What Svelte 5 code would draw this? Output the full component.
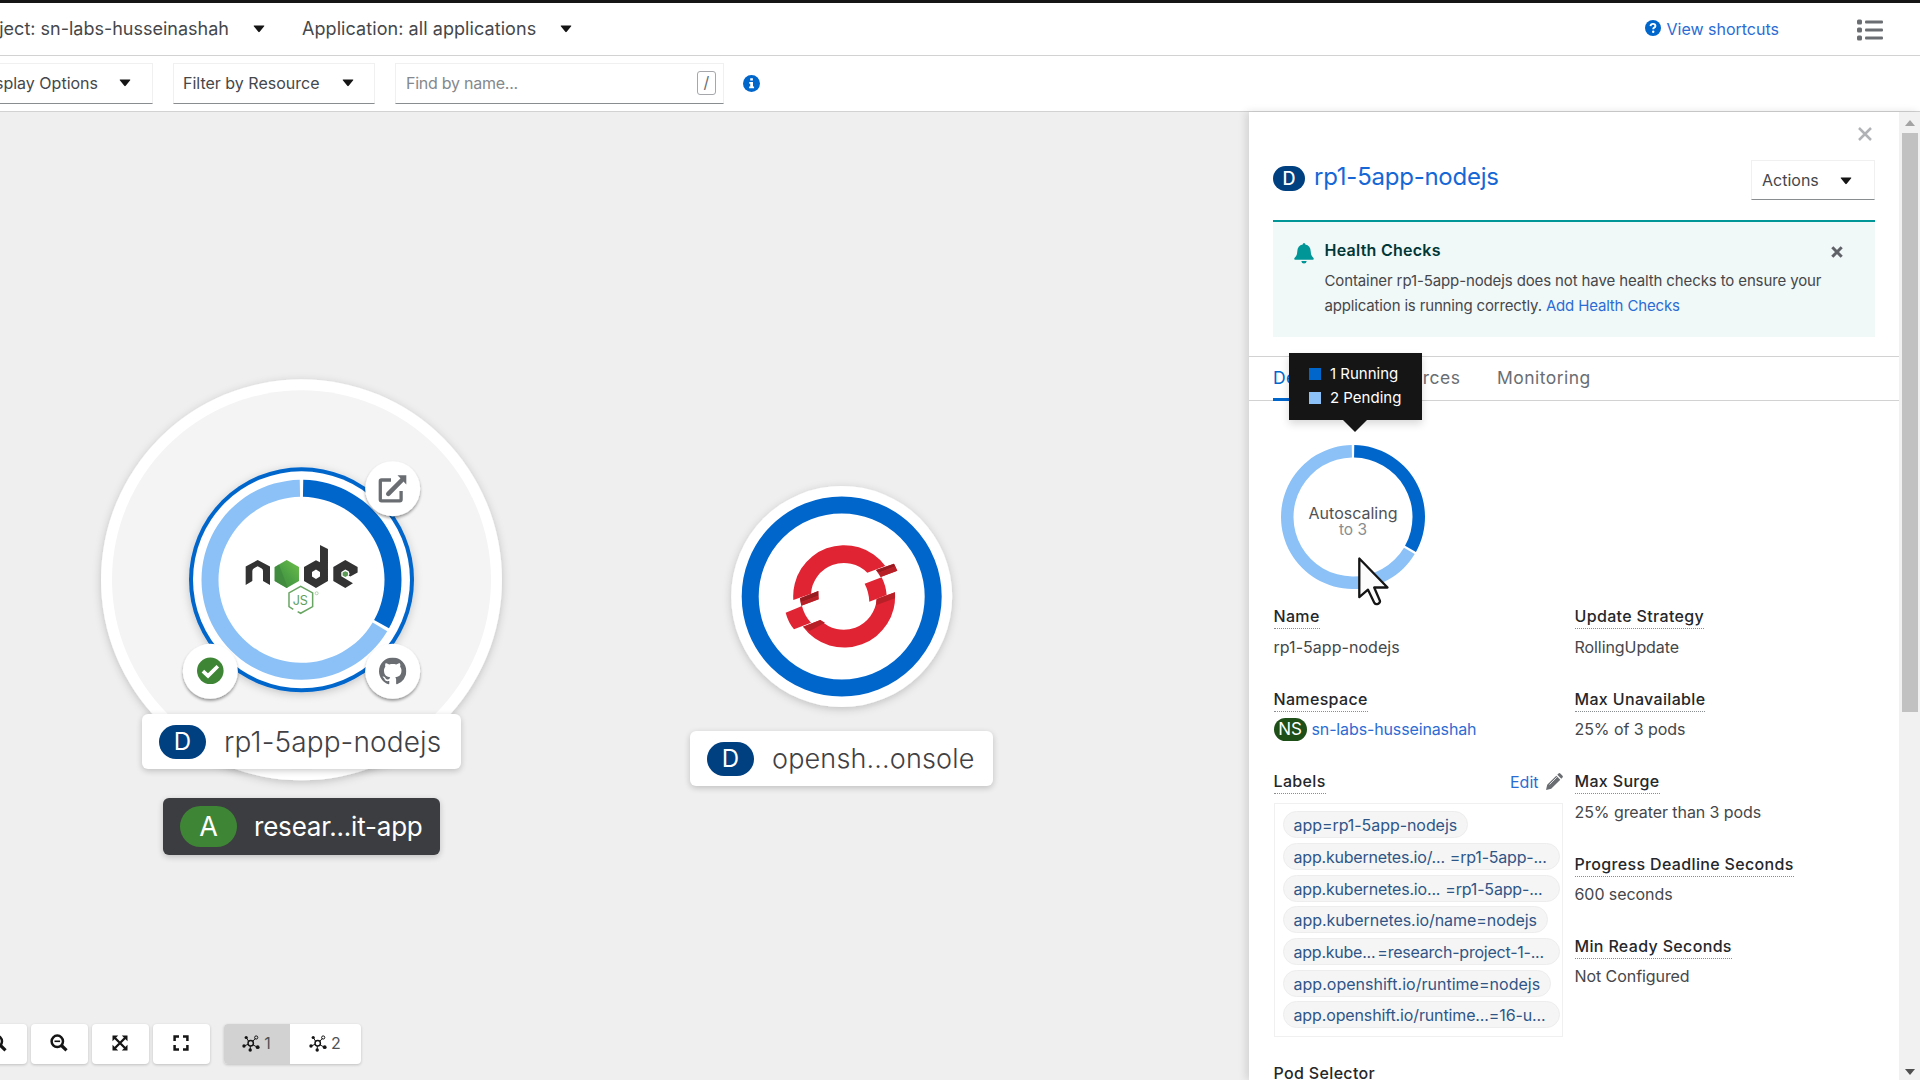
<script>
  const labels = [
    { key: 'app', value: '=rp1-5app-nodejs', width: 185, gap: 0, track: -0.06 },
    { key: 'app.kubernetes.io/...', value: '=rp1-5app-...', width: 277, gap: 5, track: -0.2 },
    { key: 'app.kubernetes.io...', value: '=rp1-5app-...', width: 277, gap: 5, track: -0.18 },
    { key: 'app.kubernetes.io/name', value: '=nodejs', width: 265, gap: 0, track: -0.06 },
    { key: 'app.kube...', value: '=research-project-1-...', width: 277, gap: 2, track: -0.23 },
    { key: 'app.openshift.io/runtime', value: '=nodejs', width: 268, gap: 0, track: 0.02 },
    { key: 'app.openshift.io/runtime...', value: '=16-u...', width: 277, gap: 0, track: -0.13 },
  ];

  const strategy = [
    { term: 'Update Strategy', text: 'RollingUpdate' },
    { term: 'Max Unavailable', text: '25% of 3 pods' },
    { term: 'Max Surge', text: '25% greater than 3 pods' },
    { term: 'Progress Deadline Seconds', text: '600 seconds' },
    { term: 'Min Ready Seconds', text: 'Not Configured' },
  ];

  // Annular sector centred on 0,0; angles in degrees clockwise from the top.
  function sector(r0, r1, from, to) {
    const p = (r, a) => {
      const t = ((a - 90) * Math.PI) / 180;
      return `${(r * Math.cos(t)).toFixed(2)} ${(r * Math.sin(t)).toFixed(2)}`;
    };
    const big = to - from > 180 ? 1 : 0;
    return `M${p(r1, from)}A${r1} ${r1} 0 ${big} 1 ${p(r1, to)}L${p(r0, to)}A${r0} ${r0} 0 ${big} 0 ${p(r0, from)}Z`;
  }
</script>

{#snippet caret()}
  <svg class="caret" viewBox="0 0 12 8" width="12" height="8"><path d="M1.2 .5h9.6q.9 0 .4.8L6.7 6.8q-.7.7-1.4 0L.8 1.300q-.5-.8.4-.8z" fill="#151515" /></svg>
{/snippet}

{#snippet mesh()}
  <svg viewBox="0 0 18 17" width="18" height="17" fill="none" stroke="#151515">
    <circle cx="8.700" cy="8.200" r="2.700" stroke-width="1.500" />
    <path d="M6.500 6.200L4.300 2.600M11 6.200l2.300-2.800M6.200 9.300L2.500 10.800M11 9.800l3.500 2M8.300 11v3.500" stroke-width="1" />
    <circle cx="14.200" cy="2.500" r="1.600" stroke-width="1" />
    <g fill="#151515" stroke="none"><circle cx="4.200" cy="2.500" r="1.600" /><circle cx="2" cy="11" r="1.700" /><circle cx="15.700" cy="12.200" r="1.900" /><circle cx="8.200" cy="15" r="1.700" /></g>
  </svg>
{/snippet}

<div class="page">
  <header class="context">
    <div class="menu project"><span>Project: sn-labs-husseinashah</span>{@render caret()}</div>
    <div class="menu app"><span>Application: all applications</span>{@render caret()}</div>
    <a class="shortcuts" href="#shortcuts">
      <svg viewBox="0 0 16 16" width="16" height="16"><circle cx="8" cy="8" r="8" fill="#06c" /><path d="M5.500 6.200q.2-2.300 2.500-2.300 2.400 0 2.400 2 0 1.200-1.200 1.800-1 .5-1 1.500" fill="none" stroke="#fff" stroke-width="1.900" /><circle cx="8.200" cy="11.800" r="1.200" fill="#fff" /></svg>
      <span>View shortcuts</span>
    </a>
    <svg class="list" viewBox="0 0 26 22" width="26" height="22" fill="#6a6e73">
      {#each [0.5, 8.5, 16.5] as y}<rect x="0" y={y} width="5" height="5" rx="1.500" /><rect x="8" y={y + 0.9} width="18" height="3.200" rx="1" />{/each}
    </svg>
  </header>

  <div class="filters">
    <div class="select display"><span>Display Options</span>{@render caret()}</div>
    <div class="select resource"><span>Filter by Resource</span>{@render caret()}</div>
    <div class="search"><span>Find by name...</span><kbd>/</kbd></div>
    <svg class="info" viewBox="0 0 16 16" width="17" height="17"><circle cx="8" cy="8" r="8" fill="#06c" /><path d="M6.800 3h2.500v2.200H6.800zM5.900 6.500h3.500v4.300h1v1.700H5.800v-1.700h1V8.200h-.9z" fill="#fff" /></svg>
  </div>

  <main>
    <section class="canvas">
      <svg class="graph" width="1249" height="968" viewBox="0 112 1249 968">
        <defs>
          <filter id="soft" x="-20%" y="-20%" width="140%" height="140%"><feDropShadow dx="0" dy="2" stdDeviation="4" flood-color="#030303" flood-opacity=".2" /></filter>
          <filter id="tight" x="-30%" y="-30%" width="160%" height="160%"><feDropShadow dx="0" dy="2" stdDeviation="1.800" flood-color="#030303" flood-opacity=".4" /></filter>
          <linearGradient id="leaf" x1="0" y1="1" x2="1" y2="0"><stop offset="0" stop-color="#3f8b3d" /><stop offset=".45" stop-color="#4b9e43" /><stop offset="1" stop-color="#6cc04a" /></linearGradient>
        </defs>

        <g transform="translate(301.500 579.800)">
          <circle r="200.500" fill="#fff" filter="url(#soft)" />
          <circle r="189.500" fill="#f4f4f4" />
          <circle r="112.500" fill="#06c" filter="url(#soft)" />
          <circle r="108.500" fill="#fff" />
          <path d={sector(83, 100, 1, 119)} fill="#06c" />
          <path d={sector(83, 100, 121, 359)} fill="#8bc1f7" />
        </g>

        <svg x="243.300" y="543.300" width="116.700" height="73.300" viewBox="490 550 350 220">
          <path d="M497 675V620L533 600l37 20v55l-21-12v-30q0-6-5-8l-11-6-11 6q-5 3-5 8v30z" fill="#333" />
          <path d="M620 600l37 21v42l-37 21-36-21v-42z" fill="url(#leaf)" />
          <path d="M597 614l-13 8v41l36 21 3-1z" fill="#3f873f" opacity=".7" />
          <path d="M720 555l24 12v96l-36 21-36-21v-42l36-20 12 6zM708 629l-12 7v14l12 7 12-7v-14z" fill="#333" fill-rule="evenodd" />
          <path d="M796 600l37 21v17l-22 12-5-3 3-5-3-8-10-5-12 7v13l35 21-23 14-36-21v-42z" fill="#333" />
          <path d="M796 634l8 4v9l-8 4-8-4v-9z" fill="#5a9a55" />
          <path d="M640 748l-13-8v-41l35-20 36 20v41l-36 20-9-5" fill="none" stroke="#6aa663" stroke-width="4.500" />
          <text class="js" x="638" y="735">JS</text>
          <circle cx="710" cy="700" r="4.500" fill="none" stroke="#8fc08a" stroke-width="2" />
        </svg>

        <g filter="url(#tight)" fill="#fff"><circle cx="392.700" cy="488.700" r="27.500" /><circle cx="210.300" cy="671.300" r="27.500" /><circle cx="392.700" cy="671.300" r="27.500" /></g>
        <g transform="translate(379 475)">
          <path d="M12 5H2.500Q1.300 5 1.300 6.200v18.300q0 1.300 1.200 1.300h18.300q1.300 0 1.300-1.300V16" fill="none" stroke="#6a6e73" stroke-width="3.300" />
          <path d="M9.300 18.800L23 5" stroke="#6a6e73" stroke-width="4.600" stroke-linecap="round" />
          <path d="M18.500.2h8.800v9.300z" fill="#6a6e73" />
        </g>
        <circle cx="210.300" cy="670.800" r="13.300" fill="#3e8635" />
        <path d="M202.900 671.200l5.100 4.700 9.800-9.600" fill="none" stroke="#fff" stroke-width="3.700" />
        <svg x="379" y="657.500" width="27.400" height="27.400" viewBox="0 0 16 16"><path fill="#6a6e73" d="M8 0C3.580 0 0 3.580 0 8c0 3.540 2.290 6.530 5.470 7.590.4.070.55-.17.550-.38 0-.19-.01-.82-.01-1.490-2.010.37-2.530-.49-2.690-.94-.09-.23-.48-.94-.82-1.130-.28-.15-.68-.52-.01-.53.630-.01 1.080.58 1.230.82.720 1.210 1.870.87 2.330.66.070-.52.280-.87.510-1.070-1.780-.2-3.640-.89-3.640-3.950 0-.87.310-1.590.82-2.150-.08-.2-.36-1.020.08-2.120 0 0 .67-.21 2.200.82.640-.18 1.320-.27 2-.27s1.360.09 2 .27c1.530-1.040 2.200-.82 2.200-.82.440 1.100.16 1.920.08 2.120.51.560.82 1.270.82 2.150 0 3.070-1.870 3.750-3.650 3.950.29.250.54.730.54 1.480 0 1.070-.01 1.930-.01 2.200 0 .21.150.46.550.38A8.010 8.010 0 0 0 16 8c0-4.420-3.580-8-8-8z" /></svg>

        <g transform="translate(841.700 596.500)">
          <circle r="110.500" fill="#fff" filter="url(#soft)" />
          <circle r="91.500" fill="none" stroke="#06c" stroke-width="17" />
        </g>
        <svg x="780" y="540" width="123.300" height="113.300" viewBox="300 210 370 340">
          <g fill="#e12433">
            <path d="M340 390A153 153 0 0 1 616 288L562 308A99 99 0 0 0 393 371z" />
            <path d="M588 300L642 281l10 21-50 19z" />
            <path d="M554 341l51-19q13 25 15 53l-52 20q-1-29-14-54z" />
            <path d="M645 367A153 153 0 0 1 369 470L421 450A99 99 0 0 0 590 387z" />
            <path d="M360 385l55-22 1 25-52 19z" />
            <path d="M317 428l49-20q6 27 27 50l-51 20q-18-22-25-50z" />
          </g>
          <path d="M588 300L642 281l4 8-50 19zM360 385l55-22v14l-53 20z" fill="#951b21" />
          <path d="M596 308l50-19 6 13-50 19zM362 397l53-20 1 11-52 19zM590 387l55-20v18l-57 21zM369 470l52-20 14 8-46 25z" fill="#b82028" />
        </svg>
      </svg>

      <div class="node-label first"><b class="kind">D</b><span>rp1-5app-nodejs</span></div>
      <div class="node-label second"><b class="kind">D</b><span>opensh...onsole</span></div>
      <div class="node-label group"><b class="kind green">A</b><span>resear...it-app</span></div>

      <div class="controls">
        <button class="zoom-in" aria-label="Zoom in"><svg viewBox="0 0 18 18" width="18" height="18" fill="none" stroke="#151515"><circle cx="7.300" cy="7.300" r="5.700" stroke-width="2.500" /><path d="M11.500 11.500l5 4.800" stroke-width="3.200" /><path d="M4.500 7.300h5.600M7.300 4.500v5.600" stroke-width="1.600" /></svg></button>
        <button aria-label="Zoom out"><svg viewBox="0 0 18 18" width="18" height="18" fill="none" stroke="#151515"><circle cx="7.300" cy="7.300" r="5.700" stroke-width="2.500" /><path d="M11.500 11.500l5 4.800" stroke-width="3.200" /><path d="M4.500 7.300h5.600" stroke-width="1.600" /></svg></button>
        <button aria-label="Fit to screen"><svg viewBox="0 0 16 16" width="16" height="16" fill="#151515"><path d="M.5.5h5.700L.5 6.200zM15.500.5v5.700L9.800.5zM.5 15.500V9.800l5.700 5.700zM15.500 15.500H9.800l5.700-5.700z" /><path d="M3 3l10 10M13 3L3 13" stroke="#151515" stroke-width="2.300" /></svg></button>
        <button aria-label="Reset view"><svg viewBox="0 0 16 16" width="16" height="16" fill="none" stroke="#151515" stroke-width="2.500"><path d="M1.600 6V1.600H6M10 1.600h4.400V6M14.400 10v4.400H10M6 14.400H1.600V10" /></svg></button>
        <div class="layouts"><span class="on">{@render mesh()}1</span><span>{@render mesh()}2</span></div>
      </div>
    </section>

    <aside>
      <div class="panel">
        <div class="close"><svg viewBox="0 0 14 14" width="14" height="14"><path d="M1 1l12 12M13 1L1 13" stroke="#b0b2b5" stroke-width="2.500" /></svg></div>
        <div class="title">
          <b class="pill">D</b><h1>rp1-5app-nodejs</h1>
          <div class="actions"><span>Actions</span>{@render caret()}</div>
        </div>
        <div class="alert">
          <svg class="bell" viewBox="0 0 20 22" width="20" height="22" fill="#009596"><path d="M10 0q1.300 0 1.300 1.500 5.200 1 5.400 6.800.1 4.700 2.800 6.700.8 1.700-.7 1.700H1.200q-1.500 0-.7-1.700 2.700-2 2.800-6.700.2-5.800 5.400-6.800Q8.700 0 10 0zM7.300 18h5.400q-.3 2.600-2.700 2.600T7.300 18z" /></svg>
          <div class="body">
            <h2>Health Checks</h2>
            <p>Container rp1-5app-nodejs does not have health checks to ensure your<br /><span class="tail">application is running correctly. <a href="#health">Add Health Checks</a></span></p>
          </div>
          <svg class="x" viewBox="0 0 12 12" width="12" height="12"><path d="M1.300 1.300l9.400 9.400M10.700 1.300l-9.400 9.400" stroke="#5f6368" stroke-width="3" /></svg>
        </div>
        <nav><span class="current">Details</span><span>Resources</span><span>Monitoring</span></nav>
        <div class="donut">
          <svg viewBox="-72 -72 144 144" width="144" height="144">
            <path d={sector(59.5, 72, 1, 119)} fill="#06c" />
            <path d={sector(59.5, 72, 121, 359)} fill="#8bc1f7" />
            <text class="big" y="1.500">Autoscaling</text><text class="small" y="17.800">to 3</text>
          </svg>
          <div class="tooltip"><div><i></i>1 Running</div><div><i class="light"></i>2 Pending</div></div>
          <svg class="cursor" viewBox="0 0 34 52" width="34" height="52"><path d="M2.300 2.500v38.700l8.700-7.500 6.400 13.200q1.200 1.900 3.600 1 2.500-1.200 1.900-3.200L17.200 31.500h13.300z" fill="#fcfcfc" stroke="#151515" stroke-width="2.300" stroke-linejoin="round" /></svg>
        </div>
        <div class="details">
          <dl>
            <div class="item"><dt>Name</dt><dd class="name">rp1-5app-nodejs</dd></div>
            <div class="item"><dt>Namespace</dt><dd class="ns"><b class="pill green">NS</b><a href="#ns">sn-labs-husseinashah</a></dd></div>
            <div class="item labels">
              <div class="row"><dt>Labels</dt>
                <a class="edit" href="#edit">Edit<svg viewBox="0 0 17 17" width="17" height="17" fill="#6a6e73"><path d="M0 17l1.200-5.200L10.300 2.700l4 4L5.200 15.800zM11.300 1.700l1.200-1.200q.9-.8 1.800 0l2.200 2.200q.8.9 0 1.800l-1.200 1.200z" /><path d="M3.500 11.500l7.300-7.300" stroke="#fff" stroke-width=".8" /></svg></a></div>
              <dd class="chips">
                {#each labels as l}
                  <span class="chip" style:width="{l.width}px" style:letter-spacing="{l.track}px"><span>{l.key}</span><span style:margin-left="{l.gap}px">{l.value}</span></span>
                {/each}
              </dd>
            </div>
            <div class="item"><dt>Pod Selector</dt></div>
          </dl>
          <dl>
            {#each strategy as s}<div class="item"><dt>{s.term}</dt><dd>{s.text}</dd></div>{/each}
          </dl>
        </div>
      </div>
      <div class="scroll">
        <svg viewBox="0 0 10 7" width="10" height="7"><path d="M0 7h10L5 1z" fill="#a3a3a3" /></svg>
        <div class="thumb"></div>
        <svg viewBox="0 0 10 7" width="10" height="7"><path d="M0 0h10L5 6z" fill="#505050" /></svg>
      </div>
    </aside>
  </main>
</div>

<style>
  :global(body) { overflow: hidden; }
  * { box-sizing: border-box; }
  a { color: #2b6cd4; text-decoration: none; }
  h1, h2, p, dl, dd { margin: 0; }
  svg { flex: none; }
  .page { width: 1920px; height: 1080px; display: flex; flex-direction: column; overflow: hidden; background: #fff; color: #45474a; font: 16px/24px Inter, "Liberation Sans", sans-serif; white-space: nowrap; }

  .context { height: 56px; flex: none; border-top: 3.500px solid #151515; border-bottom: 1px solid #d2d2d2; display: flex; align-items: center; font-size: 18px; }
  .menu { display: flex; align-items: center; }
  .project { width: 302px; justify-content: flex-end; padding-right: 37px; gap: 24px; }
  .app { gap: 24px; }
  .app span { letter-spacing: .07px; }
  .shortcuts { margin-left: auto; display: flex; align-items: center; gap: 5px; font-size: 16px; }
  .shortcuts svg { margin-top: -2px; }
  .list { margin: 1px 37px 0 78px; }

  .filters { height: 56px; flex: none; border-bottom: 1px solid #d2d2d2; display: flex; align-items: center; }
  .select, .search, .actions { height: 41px; border: 1px solid #f0f0f0; border-bottom: 1.500px solid #8a8d90; display: flex; align-items: center; justify-content: space-between; background: #fff; padding-bottom: 2px; }
  .display { width: 153px; justify-content: flex-end; gap: 21px; padding-right: 21px; border-left: 0; }
  .resource { width: 202px; margin-left: 20px; padding: 0 20px 2px 9px; }
  .search { width: 329px; margin: 0 19px 0 20px; padding: 0 7px 2px 10px; color: #85888c; }
  .search span { letter-spacing: -.25px; }
  kbd { width: 19px; height: 24px; border: 1px solid #a5a7aa; border-radius: 3px; font: 16px/21px Inter, sans-serif; text-align: center; color: #6a6e73; }

  main { display: flex; flex: 1; min-height: 0; }
  .canvas { position: relative; width: 1249px; background: #efefef; overflow: hidden; }
  .graph { display: block; }
  .js { font: 400 38px Inter, sans-serif; fill: #5f9f58; letter-spacing: 0; }
  .node-label { position: absolute; display: flex; align-items: center; background: #fff; border-radius: 6px; font-size: 28px; box-shadow: 0 2px 6px rgba(3, 3, 3, .2); color: #3f4144; font-weight: 300; }
  .kind { background: #004080; color: #fff; width: 47px; height: 34px; border-radius: 17px; font-size: 24px; line-height: 34px; font-weight: 400; text-align: center; }
  .first { left: 142px; top: 602px; width: 319px; height: 55px; padding-left: 17px; gap: 18px; letter-spacing: .12px; }
  .second { left: 690px; top: 618.500px; width: 303px; height: 55.500px; padding: 1px 0 0 17px; gap: 18px; font-size: 27px; letter-spacing: .15px; }
  .group { left: 163px; top: 686px; width: 277px; height: 57px; padding-left: 17px; gap: 17px; background: #3c3d40; color: #fff; font-size: 26px; letter-spacing: -.2px; font-weight: 400; }
  .kind.green { width: 57px; height: 41px; line-height: 41px; border-radius: 21px; background: #3e8635; font-size: 27px; }

  .controls { position: absolute; left: -30px; bottom: 16px; display: flex; gap: 4.500px; }
  .controls button { width: 56.500px; height: 40.500px; padding: 0 0 1px; border: 0; border-radius: 4px; background: #fff; box-shadow: 0 1px 3px rgba(3, 3, 3, .2); display: flex; align-items: center; justify-content: center; }
  .layouts { margin-left: 9.500px; width: 137px; height: 40.500px; display: flex; border-radius: 4px; overflow: hidden; background: #fff; box-shadow: 0 1px 3px rgba(3, 3, 3, .2); }
  .layouts span { flex: 1; display: flex; align-items: center; justify-content: center; gap: 4px; font-size: 16px; color: #4f5255; padding-bottom: 1px; }
  .layouts .on { flex: 0 0 66px; background: #d2d2d2; }

  aside { display: flex; width: 671px; background: #fff; box-shadow: -3px 0 8px rgba(3, 3, 3, .12); position: relative; }
  .panel { width: 650px; height: 968px; overflow: hidden; display: flex; flex-direction: column; }
  .close { height: 48px; flex: none; padding: 15px 0 0 609px; line-height: 0; }
  .title { height: 60px; flex: none; display: flex; padding: 0 24px; align-items: flex-start; }
  .pill { background: #004080; color: #fff; border-radius: 13px; width: 32px; height: 25px; line-height: 25px; text-align: center; font-size: 18px; font-weight: 500; margin: 6px 9px 0 0; }
  h1 { font-size: 24px; line-height: 34px; font-weight: 400; color: #1667d6; letter-spacing: -.24px; }
  .actions { width: 124px; height: 40px; margin-left: auto; padding: 0 22px 1px 10px; }
  .actions .caret, .actions :global(.caret) { margin-top: 2px; }
  .alert { height: 117px; flex: none; margin: 0 24px; border-top: 2.500px solid #009596; background: #f1f8f8; display: flex; padding: 16px 32px 0 21px; }
  .bell { margin-top: 5px; }
  .body { margin-left: 10.500px; flex: 1; }
  h2 { font-size: 16px; line-height: 24px; font-weight: 600; color: #003737; letter-spacing: .25px; }
  p { font-size: 15px; line-height: 24.500px; margin-top: 7px; letter-spacing: -.12px; }
  .tail { letter-spacing: -.16px; }
  .x { margin-top: 8px; }
  nav { margin-top: 19px; height: 45px; flex: none; border-top: 1px solid #d2d2d2; border-bottom: 1px solid #d2d2d2; display: flex; padding-left: 24px; gap: 36.500px; font-size: 17.500px; line-height: 42px; color: #6a6e73; letter-spacing: .48px; }
  nav .current { color: #06c; border-bottom: 3px solid #06c; height: 44px; }
  .donut { position: relative; margin: 44px 0 0 32px; width: 144px; height: 144px; flex: none; }
  .donut text { font-size: 16px; text-anchor: middle; fill: #4f5255; }
  .donut .small { fill: #8a8d90; font-size: 15.500px; }
  .tooltip { position: absolute; left: 8px; top: -92px; width: 133px; height: 67px; background: #151515; color: #fff; padding: 9px 0 0 20px; font-size: 15px; line-height: 24px; box-shadow: 0 4px 8px rgba(3, 3, 3, .15); letter-spacing: 0; }
  .tooltip::after { content: ""; position: absolute; left: 53px; top: 66px; border: 13px solid transparent; border-top-color: #151515; border-bottom: 0; }
  .tooltip div { display: flex; align-items: center; }
  i { width: 12px; height: 12px; background: #06c; margin-right: 9px; }
  i.light { background: #8bc1f7; }
  .cursor { position: absolute; left: 75.500px; top: 111px; }
  .details { display: grid; grid-template-columns: 289px 300px; column-gap: 12px; margin: 15.400px 0 0 24.500px; }
  .item { height: 82.400px; }
  dt { width: max-content; height: 25px; font-weight: 500; color: #25272a; letter-spacing: .34px; border-bottom: 1.500px dotted #8a8d90; }
  dd { margin-top: 5.500px; letter-spacing: -.07px; }
  .name { letter-spacing: .04px; }
  .ns { display: flex; align-items: center; letter-spacing: -.13px; }
  .ns .pill { margin: 0 5px 0 0; width: 33px; height: 23px; line-height: 23px; font-weight: 400; font-size: 17px; letter-spacing: 0; }
  .pill.green { background: #1e4f18; }
  .labels { height: 292px; }
  .row { display: flex; justify-content: space-between; }
  .edit { display: flex; gap: 7px; align-items: center; letter-spacing: 0; }
  .chips { width: 289px; height: 234px; margin-top: 8.500px; border: 1px solid #f0f0f0; padding: 7.500px 0 0 8px; display: flex; flex-direction: column; gap: 4.700px; }
  .chip { height: 27px; flex: none; border-radius: 14px; background: #f5f5f5; border: 1px solid #ededed; padding-left: 10px; line-height: 26px; color: #2f5587; }
  .scroll { width: 21px; background: #f1f1f1; display: flex; flex-direction: column; align-items: center; padding: 7px 0 4px; }
  .thumb { width: 16px; height: 579px; background: #c1c1c1; margin: 7px 0 auto; }
</style>
